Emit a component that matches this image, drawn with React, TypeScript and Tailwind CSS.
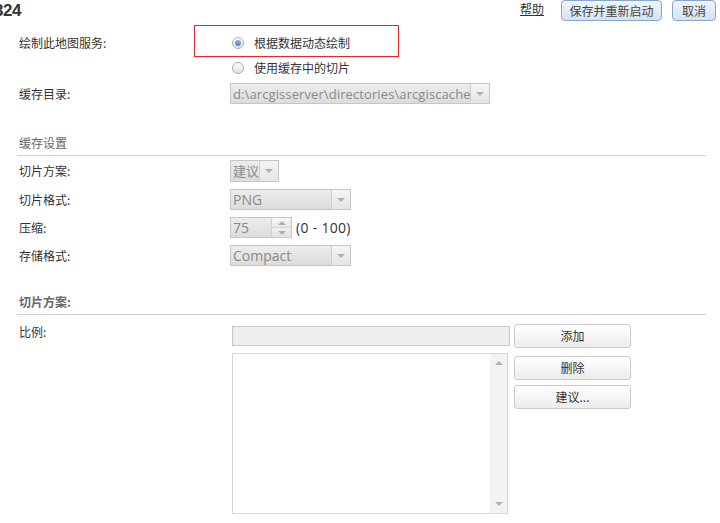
import React from "react";

const Down = () => (
  <div className="h-0 w-0 border-l-[4px] border-r-[4px] border-t-[4px] border-l-transparent border-r-transparent border-t-[#b0b0b0]" />
);
const Up = () => (
  <div className="h-0 w-0 border-l-[4px] border-r-[4px] border-b-[4px] border-l-transparent border-r-transparent border-b-[#b0b0b0]" />
);

function Select({ value, cls, textCls }: { value: string; cls: string; textCls?: string }) {
  return (
    <div className={`flex border border-[#c6c6c6] bg-linear-to-b from-[#ededed] to-[#dcdcdc] ${cls}`}>
      <div className={`flex flex-1 items-center overflow-hidden whitespace-nowrap pl-[2px] text-[#8a8a8a] ${textCls ?? ""}`}>
        {value}
      </div>
      <div className="flex w-[19px] shrink-0 items-center justify-center border-l border-[#d0d0d0] bg-linear-to-b from-[#f4f4f4] to-[#e6e6e6]">
        <Down />
      </div>
    </div>
  );
}

function Radio({ checked }: { checked?: boolean }) {
  return (
    <div className="ml-[2px] flex h-[12px] w-[12px] items-center justify-center rounded-full border border-[#a9b1ba] bg-linear-to-b from-[#fbfbfb] to-[#dfe3e8]">
      {checked && (
        <div className="h-[6px] w-[6px] rounded-full bg-linear-to-b from-[#8fb6e2] to-[#4f86c6]" />
      )}
    </div>
  );
}

const latin = "font-['Open_Sans',sans-serif] text-[14px]";

export default function App() {
  return (
    <div className="h-[523px] w-[720px] overflow-hidden bg-white font-['Noto_Sans_CJK_SC',sans-serif] text-[12px] leading-[16px] text-[#333]">
      {/* header */}
      <div className="flex h-[21px] items-start justify-between">
        <div className="ml-[-6px] mt-[1px] font-['Liberation_Sans',sans-serif] text-[17px] font-bold leading-[20px] tracking-[-0.5px] text-[#333]">
          324
        </div>
        <div className="mr-[4px] flex items-start">
          <a className="mt-[1px] cursor-pointer text-[#333] underline">帮助</a>
          <button className="ml-[17px] h-[21px] w-[101px] rounded-[4px] border border-[#88a6cb] bg-linear-to-b from-[#f0f5fb] to-[#d4e2f2] text-[12px] leading-[19px] text-[#444]">
            保存并重新启动
          </button>
          <button className="ml-[10px] h-[21px] w-[44px] rounded-[4px] border border-[#88a6cb] bg-linear-to-b from-[#f0f5fb] to-[#d4e2f2] text-[12px] leading-[19px] text-[#444]">
            取消
          </button>
        </div>
      </div>

      {/* map service */}
      <div className="mt-[12px] pl-[17px]">
        <div className="relative flex h-[20px] items-center">
          <div className="w-[213px] pl-[2px]">绘制此地图服务:</div>
          <Radio checked />
          <span className="ml-[10px]">根据数据动态绘制</span>
          <div className="absolute left-[177px] top-[-8px] h-[32px] w-[205px] border border-[#e3262c]" />
        </div>
        <div className="mt-[5px] flex h-[20px] items-center">
          <div className="w-[213px] pl-[2px]" />
          <Radio />
          <span className="ml-[10px]">使用缓存中的切片</span>
        </div>
        <div className="mt-[5px] flex h-[21px] items-center">
          <div className="w-[213px] pl-[2px]">缓存目录:</div>
          <Select
            value={"d:\\arcgisserver\\directories\\arcgiscache"}
            cls="h-[21px] w-[260px]"
            textCls="font-['Open_Sans',sans-serif] text-[13px] tracking-[0.1px]"
          />
        </div>
      </div>

      {/* cache settings */}
      <div className="mr-[14px] mt-[31px] pl-[17px]">
        <div className="border-b border-[#cfcfcf] pb-[4px] pl-[2px] text-[#666]">缓存设置</div>
        <div className="mt-[4px] flex h-[22px] items-center">
          <div className="w-[213px] pl-[2px]">切片方案:</div>
          <Select value="建议" cls="h-[22px] w-[49px]" textCls="text-[13px]" />
        </div>
        <div className="mt-[7px] flex h-[21px] items-center">
          <div className="w-[213px] pl-[2px]">切片格式:</div>
          <Select value="PNG" cls="h-[21px] w-[121px]" textCls={latin} />
        </div>
        <div className="mt-[7px] flex h-[21px] items-center">
          <div className="w-[213px] pl-[2px]">压缩:</div>
          <div className="flex h-[21px] w-[62px] border border-[#c6c6c6] bg-linear-to-b from-[#ededed] to-[#dcdcdc]">
            <div className={`flex flex-1 items-center pl-[2px] text-[#8a8a8a] ${latin}`}>75</div>
            <div className="flex w-[20px] flex-col border-l border-[#d0d0d0]">
              <div className="flex flex-1 items-center justify-center border-b border-[#d6d6d6] bg-linear-to-b from-[#f6f6f6] to-[#e8e8e8]">
                <Up />
              </div>
              <div className="flex flex-1 items-center justify-center bg-linear-to-b from-[#f0f0f0] to-[#e2e2e2]">
                <Down />
              </div>
            </div>
          </div>
          <span className={`ml-[4px] text-[#333] ${latin} tracking-[0.3px]`}>(0 - 100)</span>
        </div>
        <div className="mt-[7px] flex h-[21px] items-center">
          <div className="w-[213px] pl-[2px]">存储格式:</div>
          <Select value="Compact" cls="h-[21px] w-[121px]" textCls={latin} />
        </div>
      </div>

      {/* tiling scheme */}
      <div className="mr-[14px] mt-[28px] pl-[17px]">
        <div className="border-b border-[#cfcfcf] pb-[4px] pl-[2px] font-bold text-[#666]">切片方案:</div>
        <div className="mt-[9px] flex items-start">
          <div className="w-[213px] pl-[2px]">比例:</div>
          <div className="ml-[2px] flex flex-col">
            <div className="mt-[2px] h-[20px] w-[278px] border border-[#c8c8c8] bg-[#eeeeee]" />
            <div className="mt-[7px] flex h-[161px] w-[276px] border border-[#d6d6d6] bg-white">
              <div className="flex-1" />
              <div className="flex w-[17px] flex-col items-center justify-between bg-[#f3f3f3] py-[7px]">
                <Up />
                <Down />
              </div>
            </div>
          </div>
          <div className="ml-[4px] flex flex-col">
            <button className="h-[24px] w-[117px] rounded-[3px] border border-[#cacaca] bg-linear-to-b from-white to-[#ececec] text-[12px] text-[#333]">
              添加
            </button>
            <button className="mt-[8px] h-[24px] w-[117px] rounded-[3px] border border-[#cacaca] bg-linear-to-b from-white to-[#ececec] text-[12px] text-[#333]">
              删除
            </button>
            <button className="mt-[5px] h-[24px] w-[117px] rounded-[3px] border border-[#cacaca] bg-linear-to-b from-white to-[#ececec] text-[12px] text-[#333]">
              建议...
            </button>
          </div>
        </div>
      </div>
    </div>
  );
}
